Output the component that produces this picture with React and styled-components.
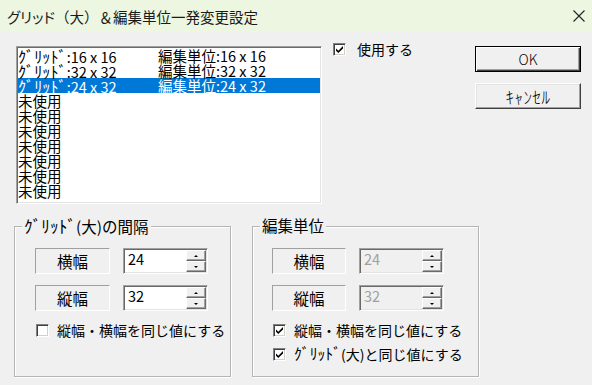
import React from 'react'
import styled, { createGlobalStyle } from 'styled-components'

const GlobalStyle = createGlobalStyle`
  html, body {
    margin: 0;
    padding: 0;
    background: #f0f0f0;
  }
  body {
    font-family: "Noto Sans CJK JP", "Noto Sans", sans-serif;
    color: #000;
  }
`

const Window = styled.div`
  width: 592px;
  height: 385px;
  background: #f0f0f0;
  display: flex;
  flex-direction: column;
  overflow: hidden;
`

const TitleBar = styled.div`
  height: 32px;
  flex: none;
  background: #edf6e1;
  display: flex;
  align-items: center;
  justify-content: space-between;
  padding: 0 6px 0 7px;
  font-size: 14.5px;
  color: #1a1a1a;
`

const Prop = styled.span`
  font-feature-settings: "palt";
`

// half-width katakana drawn a bit larger, as the old bitmap UI font does
const Kana = styled.span`
  font-size: 1.12em;
  line-height: 1;
`

const CloseIcon = () => (
  <svg width='14' height='14' viewBox='0 0 14 14'>
    <path d='M1.5 1.5 L12.5 12.5 M12.5 1.5 L1.5 12.5' stroke='#222' strokeWidth='1.1' />
  </svg>
)

const Body = styled.div`
  flex: 1;
  padding: 9px 11px 0 14px;
  display: flex;
  flex-direction: column;
`

const TopRow = styled.div`
  display: flex;
  align-items: flex-start;
`

const ListBox = styled.div`
  width: 306px;
  height: 158px;
  margin: 5px 0 0 2px;
  box-sizing: border-box;
  background: #fff;
  border: 1px solid;
  border-color: #a0a0a0 #fff #fff #a0a0a0;
  box-shadow: inset 1px 1px 0 #696969, inset -1px -1px 0 #e3e3e3;
  padding: 1px;
`

const Row = styled.div`
  display: grid;
  grid-template-columns: 140px 1fr;
  height: 15px;
  line-height: 15px;
  font-size: 14.5px;
  white-space: nowrap;
  background: ${p => (p.$selected ? '#0078d7' : 'transparent')};
  color: ${p => (p.$selected ? '#fff' : '#000')};
`

const Unused = styled.div`
  height: 15px;
  line-height: 15px;
  font-size: 14.5px;
`

const UseArea = styled.div`
  flex: 1;
  padding-left: 11px;
`

const CheckLine = styled.label`
  display: flex;
  align-items: center;
  gap: ${p => p.$gap || 8}px;
  height: ${p => p.$h || 16}px;
  font-size: 14px;
  white-space: nowrap;
`

const Box = styled.span`
  width: 13px;
  height: 13px;
  flex: none;
  box-sizing: border-box;
  background: #fff;
  border: 1px solid;
  border-color: #808080 #fff #fff #808080;
  box-shadow: inset 1px 1px 0 #404040, inset -1px -1px 0 #d4d0c8;
  display: flex;
  align-items: center;
  justify-content: center;
`

const CheckBox = ({ checked }) => (
  <Box>
    {checked && (
      <svg width='9' height='9' viewBox='0 0 9 9'>
        <path d='M1 3.5 L3.3 5.8 L8 1.1 L8 3.4 L3.3 8.1 L1 5.8 Z' fill='#000' />
      </svg>
    )}
  </Box>
)

const ButtonColumn = styled.div`
  display: flex;
  flex-direction: column;
  gap: 11px;
  margin-top: 5px;
`

const Button = styled.button`
  width: 106px;
  height: 26px;
  box-sizing: border-box;
  background: #f0f0f0;
  font-family: inherit;
  font-weight: 300;
  font-size: ${p => p.$size || 14}px;
  letter-spacing: ${p => p.$spacing || 0}px;
  padding: 0;
  color: #000;
  border: 1px solid;
  border-color: ${p => (p.$default ? '#000' : '#fff #404040 #404040 #fff')};
  box-shadow: ${p =>
    p.$default
      ? 'inset 1px 1px 0 #fff, inset -1px -1px 0 #404040, inset -2px -2px 0 #a0a0a0'
      : 'inset -1px -1px 0 #a0a0a0, inset 1px 1px 0 #e3e3e3'};
`

const BottomRow = styled.div`
  display: flex;
  margin-top: 22px;
  gap: 21px;
`

const Group = styled.div`
  position: relative;
  width: ${p => p.$w}px;
  height: 151px;
  box-sizing: border-box;
  border: 1px solid #b5b5b5;
  box-shadow: 1px 1px 0 #fff, inset 1px 1px 0 #fff;
  padding: 21px 0 0 ${p => p.$pl}px;
  display: flex;
  flex-direction: column;
`

const Legend = styled.span`
  position: absolute;
  top: -10px;
  left: 7px;
  padding: 0 2px;
  background: #f0f0f0;
  font-size: 15.5px;
  line-height: 16px;
  white-space: nowrap;
`

const FieldRow = styled.div`
  display: flex;
  gap: 13px;
  height: 26px;
  margin-bottom: 11px;
`

const FieldLabel = styled.div`
  width: ${p => p.$w}px;
  box-sizing: border-box;
  border: 1px solid;
  border-color: #a0a0a0 #fff #fff #a0a0a0;
  display: flex;
  align-items: center;
  justify-content: center;
  font-size: 15.5px;
`

const Edit = styled.div`
  width: 85px;
  box-sizing: border-box;
  border: 1px solid;
  border-color: #a0a0a0 #fff #fff #a0a0a0;
  box-shadow: inset 1px 1px 0 #696969, inset -1px -1px 0 #e3e3e3;
  background: ${p => (p.$disabled ? '#f0f0f0' : '#fff')};
  color: ${p => (p.$disabled ? '#a0a0a0' : '#000')};
  display: flex;
  padding: 1px;
`

const EditText = styled.div`
  flex: 1;
  padding: 1px 0 0 3px;
  font-size: 14.5px;
  line-height: 16px;
`

const Spin = styled.div`
  width: 20px;
  display: flex;
  flex-direction: column;
`

const SpinButton = styled.div`
  flex: 1;
  box-sizing: border-box;
  background: #f0f0f0;
  border: 1px solid;
  border-color: #fff #696969 #696969 #fff;
  box-shadow: inset -1px -1px 0 #a0a0a0;
  display: flex;
  align-items: center;
  justify-content: center;
  &::after {
    content: '';
    border-left: 2px solid transparent;
    border-right: 2px solid transparent;
    ${p => (p.$up ? 'border-bottom' : 'border-top')}: 2px solid #000;
  }
`

const Options = styled.div`
  display: flex;
  flex-direction: column;
  gap: 10px;
  margin: 1px 0 0 1px;
`

const Field = ({ label, labelWidth, value, disabled }) => (
  <FieldRow>
    <FieldLabel $w={labelWidth}>{label}</FieldLabel>
    <Edit $disabled={disabled}>
      <EditText>{value}</EditText>
      <Spin>
        <SpinButton $up />
        <SpinButton />
      </Spin>
    </Edit>
  </FieldRow>
)

const rows = [
  ['16 x 16', '16 x 16'],
  ['32 x 32', '32 x 32'],
  ['24 x 32', '24 x 32'],
]

export default function App() {
  return (
    <Window>
      <GlobalStyle />
      <TitleBar>
        <span>
          <Prop>グリッド</Prop>（大）＆編集単位一発変更設定
        </span>
        <CloseIcon />
      </TitleBar>
      <Body>
        <TopRow>
          <ListBox>
            {rows.map((r, i) => (
              <Row key={i} $selected={i === 2}>
                <span><Kana>ｸﾞﾘｯﾄﾞ</Kana>:{r[0]}</span>
                <span>編集単位:{r[1]}</span>
              </Row>
            ))}
            {Array.from({ length: 7 }).map((_, i) => (
              <Unused key={i}>未使用</Unused>
            ))}
          </ListBox>
          <UseArea>
            <CheckLine $gap={11}>
              <CheckBox checked />
              使用する
            </CheckLine>
          </UseArea>
          <ButtonColumn>
            <Button $default>OK</Button>
            <Button $size={17} $spacing={0.5}>ｷｬﾝｾﾙ</Button>
          </ButtonColumn>
        </TopRow>
        <BottomRow>
          <Group $w={217} $pl={20}>
            <Legend><Kana>ｸﾞﾘｯﾄﾞ</Kana>(大)の間隔</Legend>
            <Field label='横幅' labelWidth={75} value='24' />
            <Field label='縦幅' labelWidth={75} value='32' />
            <Options>
              <CheckLine $h={14}>
                <CheckBox />
                縦幅・横幅を同じ値にする
              </CheckLine>
            </Options>
          </Group>
          <Group $w={227} $pl={19}>
            <Legend>編集単位</Legend>
            <Field label='横幅' labelWidth={74} value='24' disabled />
            <Field label='縦幅' labelWidth={74} value='32' disabled />
            <Options>
              <CheckLine $h={14}>
                <CheckBox checked />
                縦幅・横幅を同じ値にする
              </CheckLine>
              <CheckLine $h={14}>
                <CheckBox checked />
                <span><Kana>ｸﾞﾘｯﾄﾞ</Kana>(大)と同じ値にする</span>
              </CheckLine>
            </Options>
          </Group>
        </BottomRow>
      </Body>
    </Window>
  )
}
